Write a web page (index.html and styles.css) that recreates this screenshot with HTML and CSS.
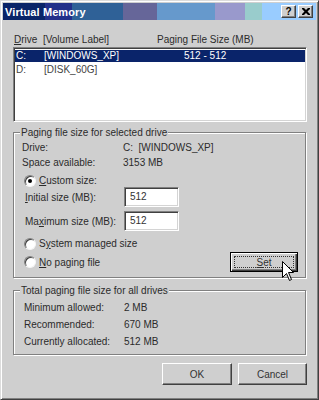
FILE: index.html
```html
<!DOCTYPE html>
<html>
<head>
    <meta http-equiv="Content-Type" content="text/html; charset=utf-8" />
    <title>Virtual Memory</title>
    <link rel="stylesheet" href="styles.css">
</head>
<body>
    <div class="window">
        <div class="titlebar">
            <span class="title">Virtual Memory</span>
            <span class="capbtn help">?</span>
            <span class="capbtn close">
                <svg width="8" height="7" viewBox="0 0 8 7"><path d="M0 0h2l2 2 2-2h2v1l-2.5 2.5 2.5 2.5v1h-2l-2-2-2 2h-2v-1l2.5-2.5-2.5-2.5z" fill="#000"/></svg>
            </span>
        </div>

        <div class="content">
            <div class="listhead">
                <span class="col-head"><u>D</u>rive&nbsp;&nbsp;[Volume Label]</span>
                <span>Paging File Size (MB)</span>
            </div>
            <div class="listbox">
                <div class="row selected"><span class="c1">C:</span><span class="c2">[WINDOWS_XP]</span><span class="c3">512 - 512</span></div>
                <div class="row"><span class="c1">D:</span><span class="c2">[DISK_60G]</span><span class="c3"></span></div>
            </div>

            <!-- selected drive -->
            <div class="group g1">
                <span class="legend">Paging file size for selected drive</span>
                <div class="info"><span class="lbl">Drive:</span><span>C:&nbsp;&nbsp;[WINDOWS_XP]</span></div>
                <div class="info"><span class="lbl">Space available:</span><span>3153 MB</span></div>
                <div class="radio checked custom"><span class="dot"></span><span><u>C</u>ustom size:</span></div>
                <div class="field"><span class="flbl"><u>I</u>nitial size (MB):</span><span class="input">512</span></div>
                <div class="field second"><span class="flbl">Ma<u>x</u>imum size (MB):</span><span class="input">512</span></div>
                <div class="radio system"><span class="dot"></span><span>S<u>y</u>stem managed size</span></div>
                <div class="setrow">
                    <div class="radio"><span class="dot"></span><span><u>N</u>o paging file</span></div>
                    <span class="btn default"><span class="focus"><u>S</u>et</span></span>
                </div>
            </div>

            <!-- all drives -->
            <div class="group g2">
                <span class="legend">Total paging file size for all drives</span>
                <div class="total"><span class="tlbl">Minimum allowed:</span><span>2 MB</span></div>
                <div class="total"><span class="tlbl">Recommended:</span><span>670 MB</span></div>
                <div class="total"><span class="tlbl">Currently allocated:</span><span>512 MB</span></div>
            </div>

            <div class="buttons">
                <span class="btn ok">OK</span>
                <span class="btn cancel">Cancel</span>
            </div>
        </div>

        <svg class="cursor" width="13" height="21" viewBox="0 0 13 21">
            <path d="M0.5 0.5 L0.5 16.5 L4.5 12.5 L7.5 19.5 L9.5 18.5 L6.5 11.5 L11.5 11.5 Z" fill="#fff" stroke="#000" stroke-width="1"/>
        </svg>
    </div>
</body>
</html>
```

FILE: styles.css
```css
body {
    margin: 0;
    background: #fff;
    font-family: "Liberation Sans", Arial, sans-serif;
    font-size: 10px;
    color: #2b2b2b;
}

u {
    text-decoration: underline;
    text-underline-offset: 1px;
}

.window {
    position: relative;
    width: 319px;
    height: 400px;
    box-sizing: border-box;
    background: #cfcfcf;
    border: 1px solid;
    border-color: #dcdcdc #404040 #404040 #dcdcdc;
    box-shadow: inset 1px 1px #fff, inset -1px -1px #808080;
    padding: 2px;
}

/* title bar */
.titlebar {
    display: flex;
    align-items: center;
    height: 17px;
    padding: 0 3px 0 2px;
    background: linear-gradient(to right,
        #0a2468 0 42px, #22308a 42px 69px, #2f6197 69px 120px,
        #666699 120px 154px, #6699cc 154px 212px, #9999cc 212px 242px,
        #99cccc 242px 259px, #99ccff 259px);
}

    .titlebar .title {
        flex: 1;
        color: #fff;
        font-weight: bold;
        font-size: 11px;
        letter-spacing: 0.1px;
    }

.capbtn {
    display: flex;
    align-items: center;
    justify-content: center;
    width: 15px;
    height: 13px;
    box-sizing: border-box;
    background: #cfcfcf;
    border: 1px solid;
    border-color: #fff #404040 #404040 #fff;
    box-shadow: inset -1px -1px #808080;
    color: #000;
    font-weight: bold;
    font-size: 10px;
    line-height: 11px;
}

    .capbtn.close {
        margin-left: 2px;
    }

/* content */
.content {
    padding: 0 9px 0 10px;
}

.listhead {
    display: flex;
    margin-top: 13px;
    line-height: 13px;
    padding-left: 1px;
}

    .listhead .col-head {
        width: 143px;
    }

.listbox {
    margin-top: 1px;
    height: 75px;
    box-sizing: border-box;
    background: #fff;
    border: 1px solid;
    border-color: #808080 #fff #fff #808080;
    box-shadow: inset 1px 1px #404040, inset -1px -1px #d4d4d4;
    padding: 2px 1px;
}

    .listbox .row {
        display: flex;
        height: 12px;
        line-height: 12px;
        padding-left: 1px;
        margin-bottom: 2px;
        color: #444;
    }

        .listbox .row.selected {
            background: #0a246a;
            color: #fff;
        }

    .listbox .c1 {
        width: 28px;
    }

    .listbox .c2 {
        width: 140px;
    }

/* group boxes */
.group {
    position: relative;
    box-sizing: border-box;
    border: 1px solid #808080;
    box-shadow: inset 1px 1px #fff, 1px 1px #fff;
    width: 293px;
}

    .group .legend {
        position: absolute;
        top: -7px;
        left: 6px;
        line-height: 13px;
        padding: 0 1px;
        background: #cfcfcf;
    }

.g1 {
    margin-top: 10px;
    height: 146px;
    padding: 7px 0 5px 0;
}

.g2 {
    margin-top: 12px;
    height: 65px;
    padding: 8px 0 4px 0;
}

.info {
    display: flex;
    line-height: 15px;
    padding-left: 8px;
}

    .info .lbl {
        width: 101px;
    }

.radio {
    display: flex;
    align-items: center;
    line-height: 13px;
    height: 13px;
    padding-left: 10px;
}

    .radio .dot {
        position: relative;
        width: 12px;
        height: 12px;
        box-sizing: border-box;
        border-radius: 50%;
        background: #fff;
        border: 1px solid;
        border-color: #808080 #f4f4f4 #f4f4f4 #808080;
        box-shadow: inset 1px 1px #404040;
        margin-right: 3px;
    }

    .radio.checked .dot::after {
        content: "";
        position: absolute;
        left: 3px;
        top: 3px;
        width: 4px;
        height: 4px;
        border-radius: 50%;
        background: #000;
    }

.radio.custom {
    margin-top: 4px;
}

.radio.system {
    margin-top: 6px;
}

.field {
    display: flex;
    align-items: center;
    height: 20px;
    padding-left: 11px;
}

    .field.second {
        margin-top: 4px;
    }

    .field .flbl {
        width: 99px;
    }

.input {
    width: 55px;
    height: 20px;
    box-sizing: border-box;
    background: #fff;
    border: 1px solid;
    border-color: #808080 #fff #fff #808080;
    box-shadow: inset 1px 1px #404040, inset -1px -1px #d4d4d4;
    padding-left: 5px;
    line-height: 18px;
    color: #333;
}

.setrow {
    display: flex;
    align-items: center;
    justify-content: space-between;
    height: 20px;
    margin-top: 2px;
    padding-right: 7px;
}

/* buttons */
.btn {
    display: flex;
    align-items: center;
    justify-content: center;
    box-sizing: border-box;
    background: #cfcfcf;
    border: 1px solid;
    border-color: #fff #404040 #404040 #fff;
    box-shadow: inset -1px -1px #808080;
    color: #333;
}

    .btn.default {
        width: 68px;
        height: 20px;
        border-color: #000;
        box-shadow: inset 1px 1px #fff, inset -1px -1px #404040, inset -2px -2px #808080;
        padding: 3px;
    }

    .btn .focus {
        flex: 1;
        align-self: stretch;
        display: flex;
        align-items: center;
        justify-content: center;
        border: 1px dotted #333;
    }

.total {
    display: flex;
    line-height: 17px;
    padding-left: 10px;
}

    .total .tlbl {
        width: 100px;
    }

.buttons {
    display: flex;
    justify-content: flex-end;
    gap: 6px;
    margin-top: 8px;
}

    .buttons .btn {
        width: 70px;
        height: 22px;
    }

    .buttons .cancel {
        width: 69px;
    }

.cursor {
    position: absolute;
    left: 281px;
    top: 260px;
}
```
